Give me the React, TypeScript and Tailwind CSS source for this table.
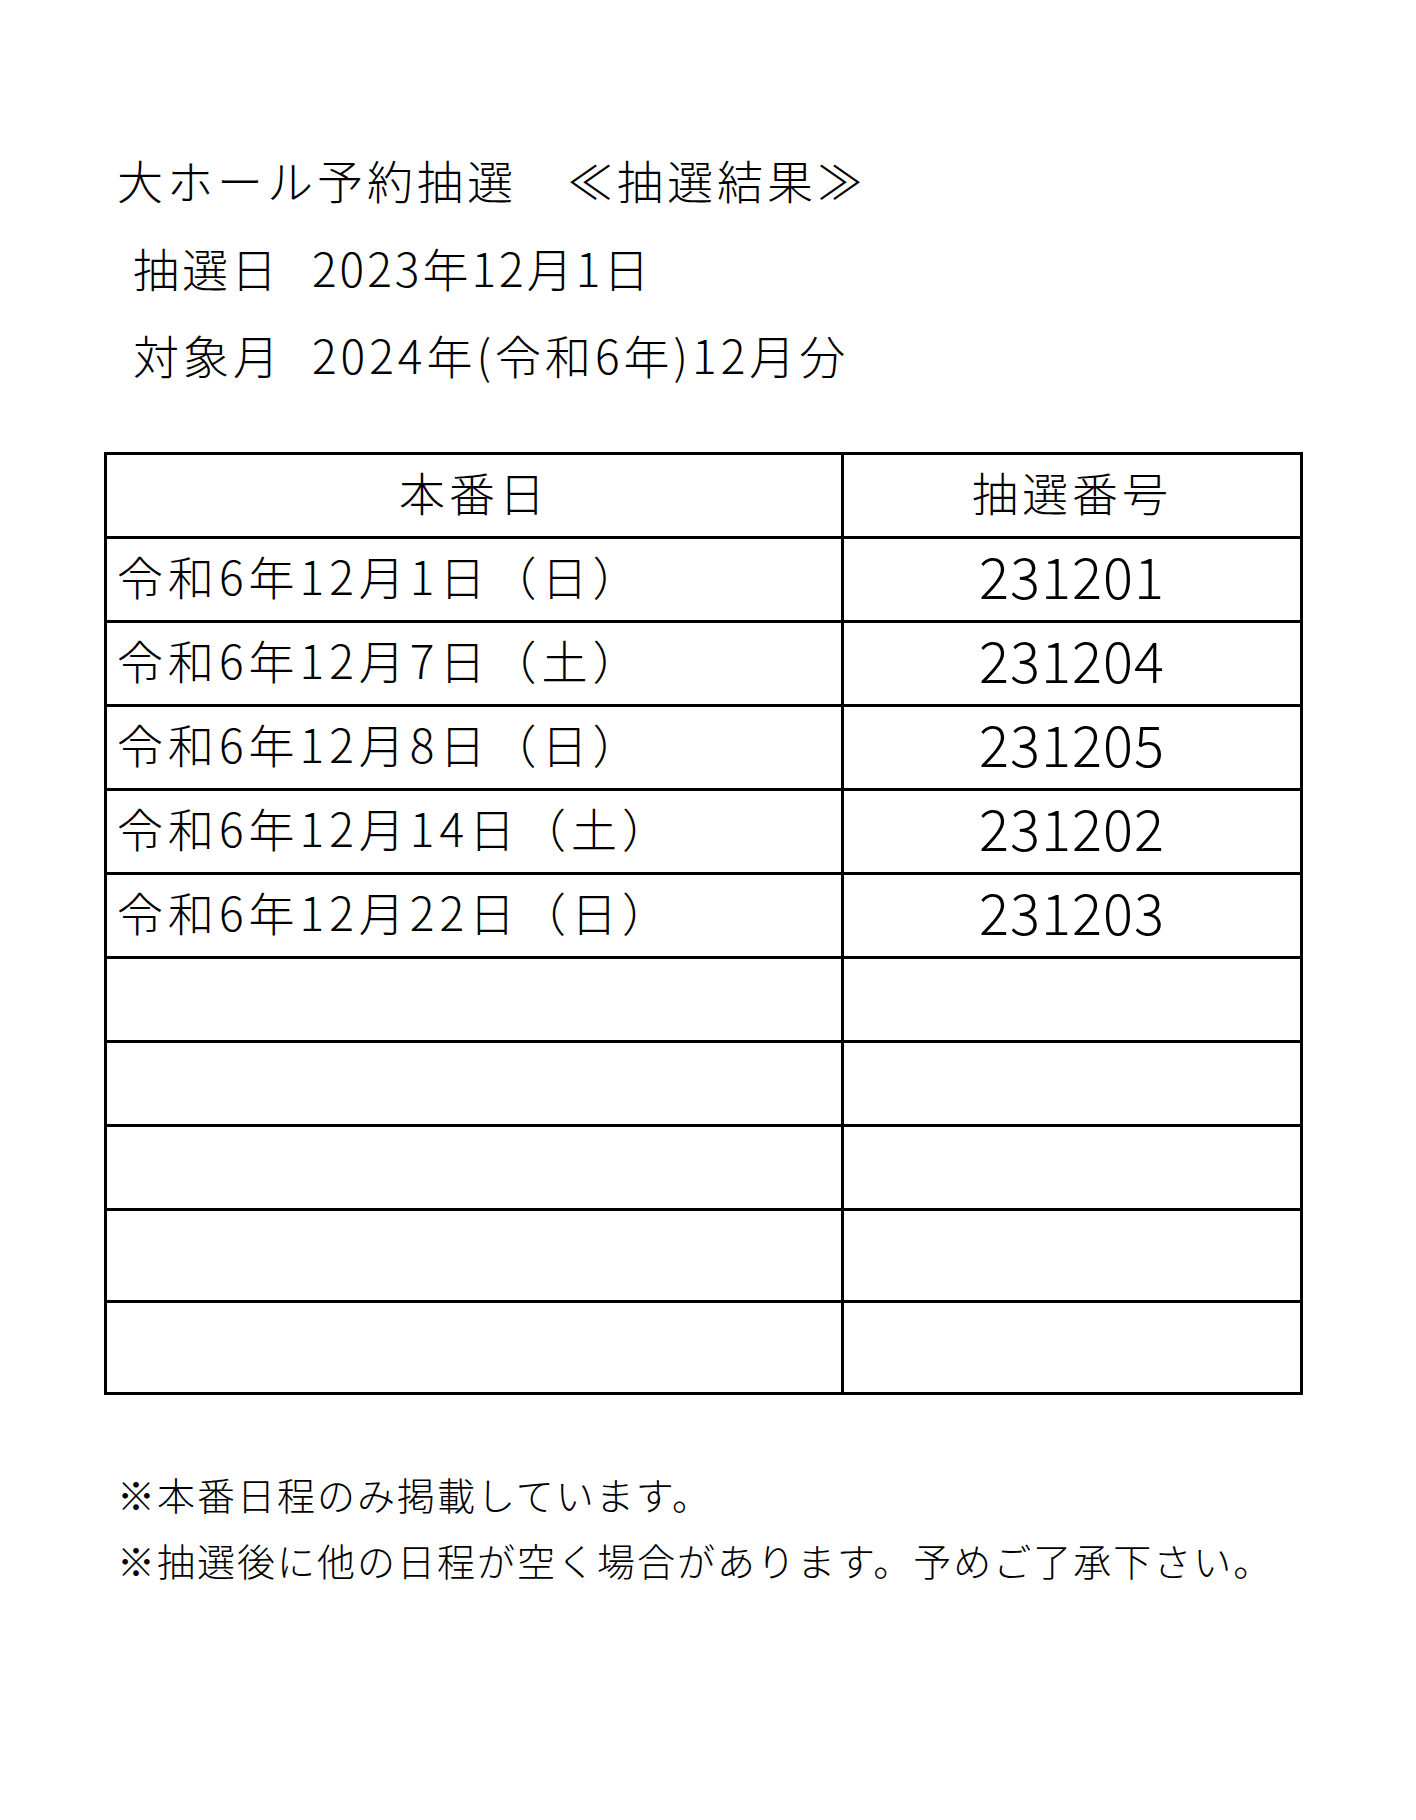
import React from "react";

type Row = { date: string; number: string };

const rows: Row[] = [
  { date: "令和6年12月1日（日）", number: "231201" },
  { date: "令和6年12月7日（土）", number: "231204" },
  { date: "令和6年12月8日（日）", number: "231205" },
  { date: "令和6年12月14日（土）", number: "231202" },
  { date: "令和6年12月22日（日）", number: "231203" },
  { date: "", number: "" },
  { date: "", number: "" },
  { date: "", number: "" },
  { date: "", number: "" },
  { date: "", number: "" },
];

export default function App() {
  return (
    <div
      className="w-[1416px] min-h-[1820px] bg-white text-black font-light"
      style={{ fontFamily: "'Noto Sans CJK JP', 'Noto Sans', sans-serif" }}
    >
      <div className="pt-[135px] pl-[104px]">
        {/* Heading block */}
        <div className="pl-[13px] text-[46px] leading-[88px] tracking-[4px]">
          大ホール予約抽選　≪抽選結果≫
        </div>
        <div className="pl-[29px] text-[46px] leading-[88px] tracking-[3px]">
          <span className="mr-[32px]">抽選日</span>2023年12月1日
        </div>
        <div className="pl-[29px] text-[46px] leading-[86px] tracking-[4px]">
          <span className="mr-[29px]">対象月</span>2024年(令和6年)12月分
        </div>

        {/* Result table */}
        <table className="mt-[55px] w-[1199px] table-fixed border-collapse border-[3px] border-black">
          <colgroup>
            <col className="w-[737px]" />
            <col />
          </colgroup>
          <thead>
            <tr className="h-[84px]">
              <th className="border-[3px] border-black pt-0 pb-[10px] px-0 text-center text-[46px] leading-none font-light tracking-[4px]">
                本番日
              </th>
              <th className="border-[3px] border-black pt-0 pb-[10px] px-0 text-center text-[46px] leading-none font-light tracking-[4px]">
                抽選番号
              </th>
            </tr>
          </thead>
          <tbody>
            {rows.map((r, i) => (
              <tr key={i} className={i >= 8 ? "h-[92px]" : "h-[84px]"}>
                <td className="border-[3px] border-black pt-0 pb-[10px] pl-[10px] pr-0 text-left text-[46px] leading-none tracking-[5px] whitespace-nowrap">
                  {r.date}
                </td>
                <td className="border-[3px] border-black pt-0 pb-[10px] px-0 text-center text-[56px] leading-none tracking-[1px]">
                  {r.number}
                </td>
              </tr>
            ))}
          </tbody>
        </table>

        {/* Notes */}
        <div className="mt-[66px] pl-[13px] text-[38px] leading-[66px] tracking-[2px]">
          <p>※本番日程のみ掲載しています。</p>
          <p>※抽選後に他の日程が空く場合があります。予めご了承下さい。</p>
        </div>
      </div>
    </div>
  );
}
